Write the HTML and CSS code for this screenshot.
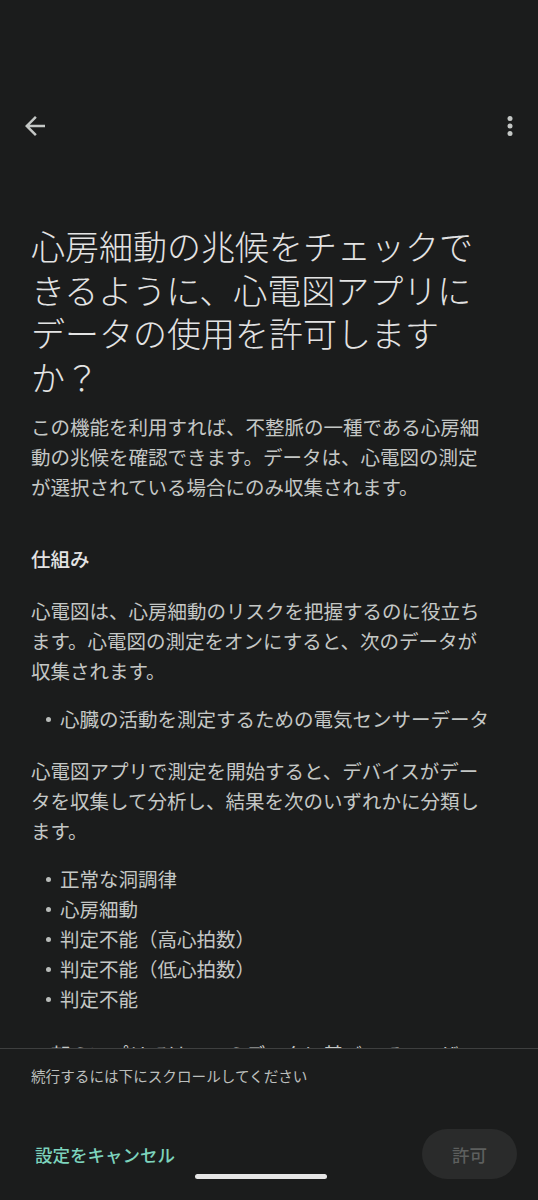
FILE: index.html
```html
<!DOCTYPE html>
<html lang="ja">
<head>
<meta charset="utf-8">
<title>心電図</title>
<link rel="stylesheet" href="styles.css">
</head>
<body>
<div class="screen">
  <header class="appbar">
    <button class="icon-btn back" aria-label="戻る">
      <svg viewBox="0 0 24 24" width="30" height="30"><path d="M20 11H7.83l5.59-5.59L12 4l-8 8 8 8 1.41-1.41L7.83 13H20v-2z"/></svg>
    </button>
    <button class="icon-btn more" aria-label="その他">
      <svg viewBox="0 0 24 24" width="30" height="30"><circle cx="12" cy="6" r="2"/><circle cx="12" cy="12" r="2"/><circle cx="12" cy="18" r="2"/></svg>
    </button>
  </header>
  <main class="scroll">
    <div class="content">
      <h1 class="title">心房細動の兆候をチェックできるように、心電図アプリにデータの使用を許可しますか？</h1>
      <p class="text intro">この機能を利用すれば、不整脈の一種である心房細動の兆候を確認できます。データは、心電図の測定が選択されている場合にのみ収集されます。</p>
      <h2 class="subhead">仕組み</h2>
      <p class="text">心電図は、心房細動のリスクを把握するのに役立ちます。心電図の測定をオンにすると、次のデータが収集されます。</p>
      <ul class="bullets">
        <li>心臓の活動を測定するための電気センサーデータ</li>
      </ul>
      <p class="text">心電図アプリで測定を開始すると、デバイスがデータを収集して分析し、結果を次のいずれかに分類します。</p>
      <ul class="bullets last">
        <li>正常な洞調律</li>
        <li>心房細動</li>
        <li>判定不能（高心拍数）</li>
        <li>判定不能（低心拍数）</li>
        <li>判定不能</li>
      </ul>
      <p class="text">一部のアプリでは、このデータに基づいてユーザーに通知が表示されることがあります。</p>
    </div>
  </main>
  <footer class="bottom">
    <p class="hint">続行するには下にスクロールしてください</p>
    <div class="actions">
      <button class="btn-text">設定をキャンセル</button>
      <button class="btn-pill" disabled>許可</button>
    </div>
  </footer>
  <div class="home-indicator"></div>
</div>
</body>
</html>
```

FILE: styles.css
```css
* { box-sizing: border-box; }
html, body { margin: 0; padding: 0; background: #1b1c1c; }
body { font-family: "Noto Sans CJK JP", "Noto Sans", sans-serif; }

.screen {
  position: relative;
  width: 538px;
  height: 1200px;
  display: flex;
  flex-direction: column;
  overflow: hidden;
  background: #1b1c1c;
}

.appbar {
  margin-top: 94px;
  height: 64px;
  flex: none;
  display: flex;
  align-items: center;
  justify-content: space-between;
  padding: 0 13px 0 20px;
}
.icon-btn {
  background: none;
  border: 0;
  padding: 0;
  width: 30px;
  height: 30px;
  display: flex;
}
.icon-btn svg { fill: #c4c7c5; }

.scroll {
  flex: 1;
  min-height: 0;
  overflow: hidden;
}
.content {
  padding: 66px 43px 0 31px;
}

.title {
  margin: 0;
  font-size: 34px;
  line-height: 43.5px;
  font-weight: 300;
  color: #e3e3e3;
}
.text {
  margin: 0;
  font-size: 19.5px;
  line-height: 30px;
  color: #c4c7c5;
}
.intro { margin-top: 14px; }
.subhead {
  margin: 42px 0 22px;
  font-size: 19.5px;
  line-height: 30px;
  font-weight: 500;
  color: #e3e3e3;
}
.bullets {
  list-style: none;
  margin: 18px 0 22px;
  padding: 0 0 0 29px;
  font-size: 19.5px;
  line-height: 30px;
  color: #c4c7c5;
}
.bullets.last { margin-bottom: 25px; }
.bullets li { position: relative; }
.bullets li::before {
  content: "";
  position: absolute;
  left: -14px;
  top: 13px;
  width: 5px;
  height: 5px;
  border-radius: 50%;
  background: #b9bcba;
}

.bottom {
  flex: none;
  height: 152px;
  border-top: 1px solid #3e3f3f;
  padding-top: 17px;
}
.hint {
  margin: 0 31px;
  font-size: 14.6px;
  line-height: 20px;
  color: #bcbfbd;
}
.actions {
  margin-top: 43px;
  height: 50px;
  display: flex;
  align-items: center;
  justify-content: space-between;
  padding: 0 21px 0 35px;
}
.btn-text {
  background: none;
  border: 0;
  padding: 0;
  font-family: inherit;
  font-size: 17.5px;
  font-weight: 500;
  color: #7dd3bd;
}
.btn-pill {
  width: 95px;
  height: 50px;
  border-radius: 25px;
  border: 0;
  background: #2a2b2b;
  font-family: inherit;
  font-size: 17.5px;
  font-weight: 500;
  color: #5d5f5e;
}

.home-indicator {
  position: absolute;
  left: 195px;
  bottom: 21px;
  width: 132px;
  height: 5px;
  border-radius: 3px;
  background: #e6e6e6;
}
```
